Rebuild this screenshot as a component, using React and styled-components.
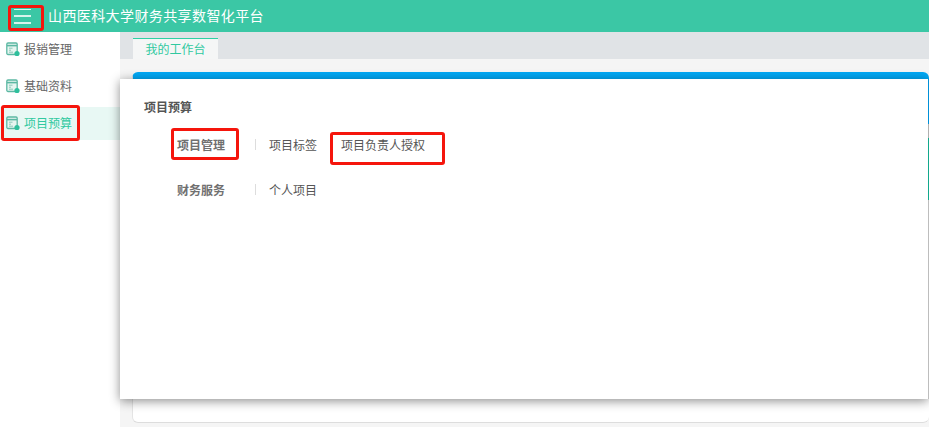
import React from 'react'
import styled, { createGlobalStyle } from 'styled-components'

const GlobalStyle = createGlobalStyle`
  html, body {
    margin: 0;
    padding: 0;
    background: #fff;
    overflow: hidden;
  }
  body {
    font-family: "Noto Sans CJK SC", "Liberation Sans", sans-serif;
  }
`

const Page = styled.div`
  width: 929px;
  height: 427px;
  position: relative;
  overflow: hidden;
`
const Header = styled.div`
  height: 32px;
  background: #3bc7a5;
  display: flex;
  align-items: center;
  padding-left: 14px;
  color: #fff;
`
const Burger = styled.div`
  width: 17px;
  height: 15px;
  display: flex;
  flex-direction: column;
  justify-content: space-between;
  margin-right: 17px;
  span {
    display: block;
    height: 1.5px;
    background: #d8f4ec;
  }
`
const Title = styled.div`
  font-size: 14px;
  line-height: 30px;
  padding-bottom: 2px;
  letter-spacing: 0.4px;
`
const Body = styled.div`
  display: flex;
  height: 395px;
`
const Sidebar = styled.div`
  width: 120px;
  flex: none;
  padding-top: 1px;
  background: #fff;
`
const MenuItem = styled.div`
  height: 33px;
  margin-bottom: ${(p) => p.$gap}px;
  display: flex;
  align-items: center;
  padding-left: 6px;
  gap: 4px;
  font-size: 12px;
  line-height: 30px;
  color: ${(p) => (p.$active ? '#30c9a0' : '#666')};
  background: ${(p) => (p.$active ? '#e8f8f4' : 'transparent')};
  span {
    position: relative;
    top: -1px;
  }
`
const Main = styled.div`
  flex: 1;
  background: #f5f5f5;
`
const TabBar = styled.div`
  height: 27px;
  background: #e0e3e6;
  padding-left: 13px;
  display: flex;
  align-items: flex-end;
`
const Tab = styled.div`
  width: 85px;
  height: 20px;
  background: #f5f6f6;
  border-top: 1px solid #2fd0a5;
  color: #30c9a0;
  font-size: 12px;
  line-height: 20px;
  text-align: center;
`
const Card = styled.div`
  box-sizing: border-box;
  margin: 13px 0 0 12px;
  height: 351px;
  background: #fff;
  border-radius: 6px;
  border-top: 7px solid #00a8f5;
  border-bottom: 1px solid #ddd;
  border-left: 1px solid #e4e4e4;
`
const Panel = styled.div`
  position: absolute;
  left: 120px;
  top: 79px;
  width: 808px;
  height: 320px;
  background: #fff;
  box-shadow: 0 2px 10px rgba(0, 0, 0, 0.45);
  padding: 19px 0 0 24px;
  box-sizing: border-box;
`
const EdgeStrip = styled.div`
  position: absolute;
  right: 0;
  top: 79px;
  width: 1px;
  height: 320px;
  background: linear-gradient(#0090d8 0 45px, #b0b0b0 45px 59px, #12a88c 59px 121px, #bdbdbd 121px);
`
const PanelTitle = styled.div`
  font-size: 12px;
  font-weight: 700;
  color: #555;
  line-height: 18px;
  margin-bottom: 19px;
`
const Group = styled.div`
  display: flex;
  align-items: center;
  height: 18px;
  margin-bottom: 27px;
  padding-left: 33px;
`
const GroupName = styled.div`
  width: 78px;
  font-size: 12px;
  font-weight: 700;
  color: #707070;
`
const Sep = styled.div`
  width: 1px;
  height: 11px;
  background: #ddd;
  margin-right: 13px;
`
const GroupLink = styled.div`
  font-size: 12px;
  color: #555;
  margin-right: 24px;
`
const Mark = styled.div`
  position: absolute;
  left: ${(p) => p.$x}px;
  top: ${(p) => p.$y}px;
  width: ${(p) => p.$w}px;
  height: ${(p) => p.$h}px;
  box-sizing: border-box;
  border: 3px solid #f5150c;
  border-radius: 3px;
`

function MenuIcon() {
  return (
    <svg width="14" height="15" viewBox="0 0 14 15" fill="none">
      <rect x="0.8" y="1" width="10.4" height="11.5" rx="1.2" fill="#e6f5f0" stroke="#5cb8a3" strokeWidth="1.3" />
      <path d="M1 3.6h10" stroke="#5cb8a3" strokeWidth="1.6" />
      <path d="M3 6.2h3.5M3 8.2h2M3 10.2h4" stroke="#8cc9b9" strokeWidth="1" />
      <circle cx="11" cy="11.5" r="2.6" fill="#2fbf9c" />
    </svg>
  )
}

export default function App() {
  return (
    <Page>
      <GlobalStyle />
      <Header>
        <Burger>
          <span />
          <span />
          <span />
        </Burger>
        <Title>山西医科大学财务共享数智化平台</Title>
      </Header>
      <Body>
        <Sidebar>
          <MenuItem $gap={4}>
            <MenuIcon />
            <span>报销管理</span>
          </MenuItem>
          <MenuItem $gap={4}>
            <MenuIcon />
            <span>基础资料</span>
          </MenuItem>
          <MenuItem $active $gap={0}>
            <MenuIcon />
            <span>项目预算</span>
          </MenuItem>
        </Sidebar>
        <Main>
          <TabBar>
            <Tab>我的工作台</Tab>
          </TabBar>
          <Card />
        </Main>
      </Body>
      <Panel>
        <PanelTitle>项目预算</PanelTitle>
        <Group>
          <GroupName>项目管理</GroupName>
          <Sep />
          <GroupLink>项目标签</GroupLink>
          <GroupLink>项目负责人授权</GroupLink>
        </Group>
        <Group>
          <GroupName>财务服务</GroupName>
          <Sep />
          <GroupLink>个人项目</GroupLink>
        </Group>
      </Panel>
      <EdgeStrip />
      <Mark $x={8} $y={5} $w={36} $h={26} />
      <Mark $x={1} $y={105} $w={79} $h={36} />
      <Mark $x={171} $y={128} $w={68} $h={32} />
      <Mark $x={330} $y={132} $w={115} $h={33} />
    </Page>
  )
}
